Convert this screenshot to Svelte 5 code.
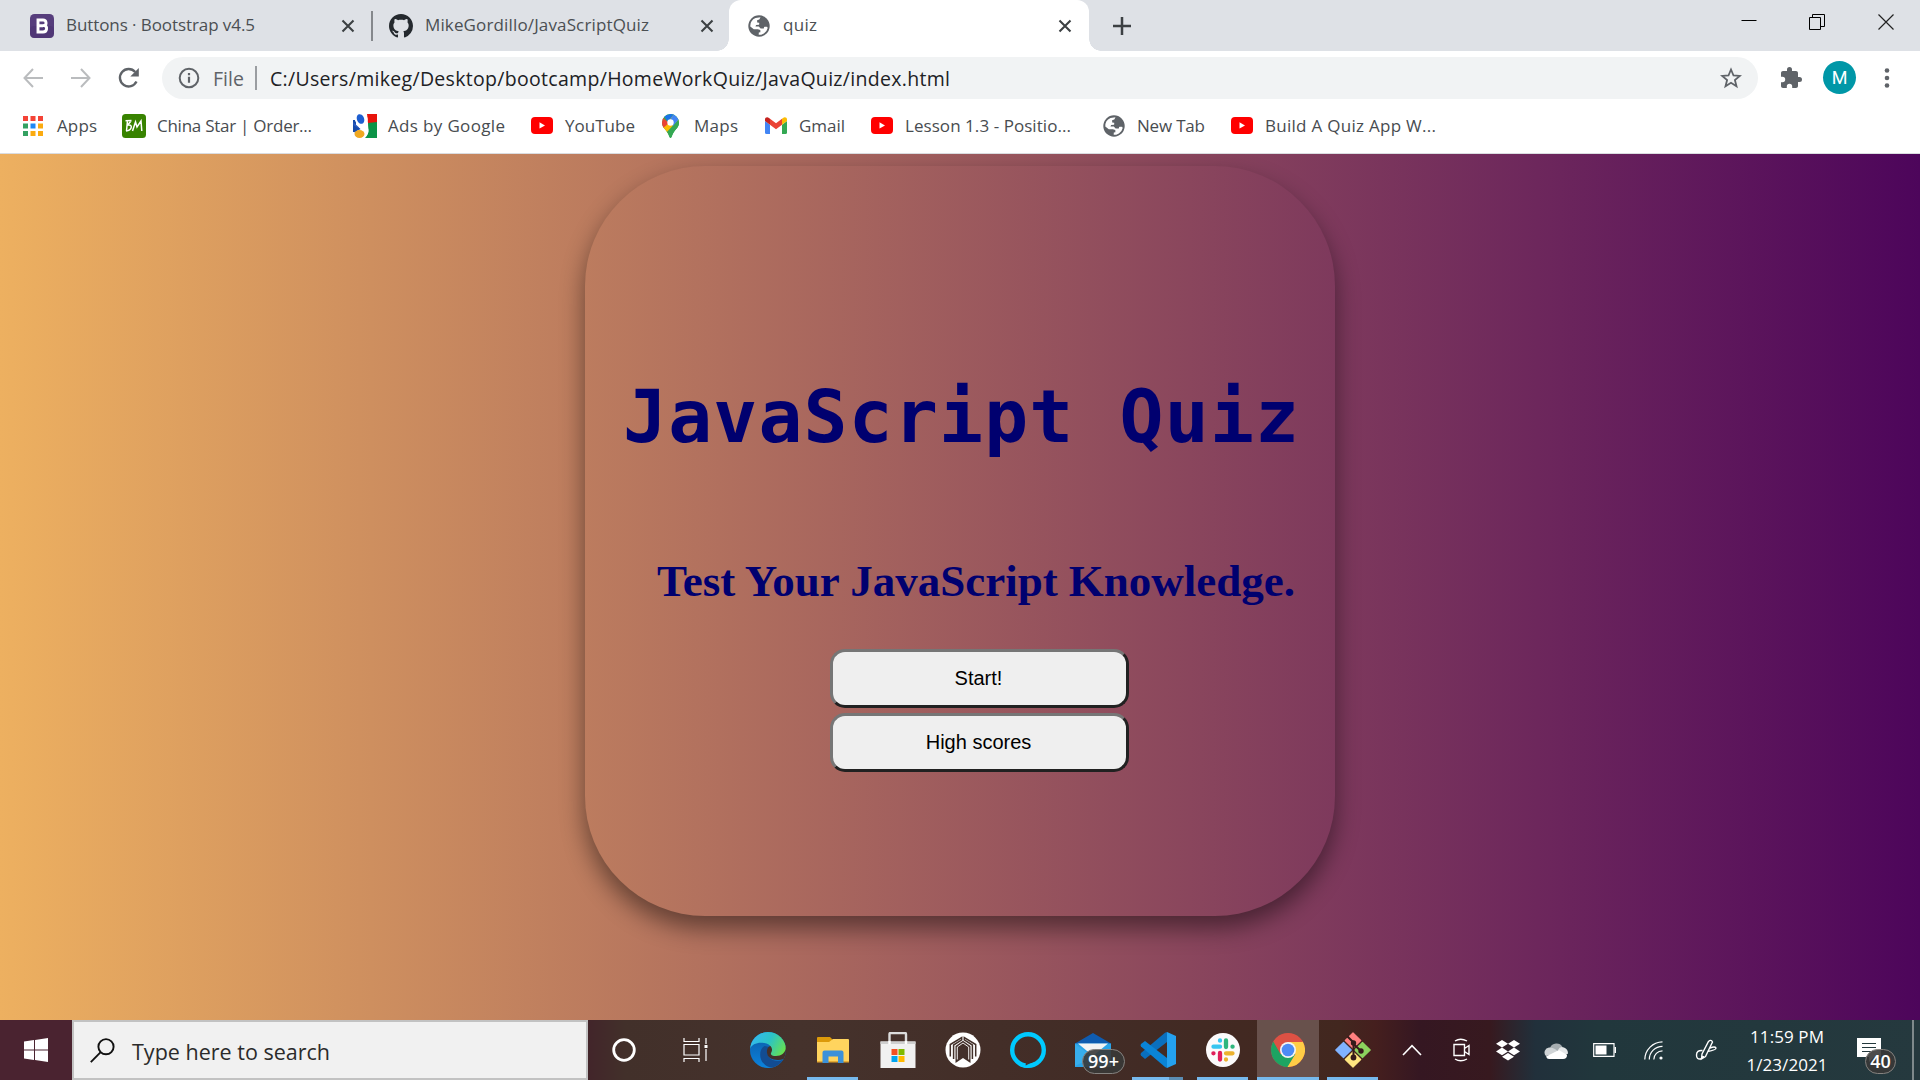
<script>
  // Spreads letters so that a label takes exactly the given width.
  function fit(el, width) {
    const n = el.textContent.length;
    const natural = el.getBoundingClientRect().width;
    el.style.letterSpacing = `${(width - natural) / Math.max(1, n - 1)}px`;
    el.style.marginRight = `${-(width - natural) / Math.max(1, n - 1)}px`;
  }

  const bookmarks = [
    { icon: 'apps', label: 'Apps', w: 40, gap: 14, box: 99 },
    { icon: 'bm', label: 'China Star | Order...', w: 155, gap: 11, box: 231 },
    { icon: 'ads', label: 'Ads by Google', w: 117, gap: 11, box: 178 },
    { icon: 'yt', label: 'YouTube', w: 70, gap: 12, box: 131 },
    { icon: 'maps', label: 'Maps', w: 44, gap: 15, box: 103 },
    { icon: 'gmail', label: 'Gmail', w: 46, gap: 12, box: 106 },
    { icon: 'yt', label: 'Lesson 1.3 - Positio...', w: 166, gap: 12, box: 231 },
    { icon: 'globe', label: 'New Tab', w: 68, gap: 11, box: 129 },
    { icon: 'yt', label: 'Build A Quiz App W...', w: 171, gap: 12, box: 230 }
  ];
</script>

{#snippet globe()}
  <svg width="24" height="24" viewBox="0 0 24 24">
    <circle cx="12" cy="12" r="10.7" fill="#5f6368" />
    <path d="M13.5 3.2l-1.2 2.3-2.2.7.1 2.4 2.1.1-.2 2.1-3 .1-.6 1.7 3.3 0 1.8 2 2.9 0 .8-1.9 2.8 0 .6 1.2a8.8 8.8 0 0 1-3.8 5.5l-2.7 1.3-2.5 0 .1-2.2 1.6-.3-.1-2.3-2.5-.6-4-.1L3.3 12.4a8.8 8.8 0 0 1 5.2-8.5z" fill="#fff" />
    <path d="M14 3.7l-1.1 2.2-1.9.9.2 1.2 2.3.5-.3 3.2 1.3 1.4 1.8 1.3 1.2-2.4 3.4.2.2-1.8A9 9 0 0 0 14 3.7z" fill="#5f6368" />
  </svg>
{/snippet}

{#snippet closeX()}
  <svg class="x" width="14" height="14" viewBox="0 0 14 14"><path d="M1.5 1.5l11 11M12.5 1.5l-11 11" stroke="#3c4043" stroke-width="2.1" /></svg>
{/snippet}

{#snippet mark(kind)}
  {#if kind === 'apps'}
    <svg width="20" height="20" viewBox="0 0 20 20">
      {#each ['#f44336', '#f44336', '#f44336', '#34a162', '#1e88f5', '#fbab10', '#34a162', '#fbab10', '#fbab10'] as c, i}
        <rect x={(i % 3) * 7.5} y={Math.floor(i / 3) * 7.5} width="5" height="5" fill={c} />
      {/each}
    </svg>
  {:else if kind === 'bm'}
    <svg width="24" height="24" viewBox="0 0 24 24">
      <rect width="24" height="24" rx="3.500" fill="#388300" />
      <path d="M3.500 6.800L9.500 6.500M5.500 6.500L4.500 17M5 11.300q5-1 4.200 2.400Q8.500 16.500 4 17M9 7L5.500 11.300M10.500 17L13.500 8l1.500 5 4-6 .8 10" fill="none" stroke="#fff" stroke-width="1.500" />
    </svg>
  {:else if kind === 'ads'}
    <svg width="24" height="24" viewBox="0 0 24 24">
      <path d="M14 0h10v9h-9z" fill="#e8140c" />
      <path d="M15 9l9-1v16H12c5-5 3-9 3-15z" fill="#0c9447" />
      <path d="M0 6h3v12H0z" fill="#164aa8" /><path d="M0 8l9 8-7 4z" fill="#2a5bc0" />
      <path d="M8 0c8 0 8 7 4 10 5 4 5 11-2 14H2c-2-5 2-8 6-9-3-2-3-5-1-5C0 10 0 0 8 0z" fill="#fff" />
      <ellipse cx="7.500" cy="5" rx="3.600" ry="5" fill="#1d5ed0" transform="rotate(-20 7.500 5)" />
      <path d="M0 11l7 4-6 3z" fill="#164aa8" />
      <ellipse cx="6.500" cy="20" rx="5" ry="4" fill="#f0a820" />
    </svg>
  {:else if kind === 'yt'}
    <svg width="22" height="17" viewBox="0 0 22 17"><rect width="22" height="17" rx="4" fill="#f00" /><path d="M8.500 5.200v6.400l5.500-3.200z" fill="#fff" /></svg>
  {:else if kind === 'maps'}
    <svg width="17" height="24" viewBox="0 0 17 24">
      <clipPath id="pin"><path d="M8.500 0A8.500 8.500 0 0 0 0 8.500c0 5 3.500 6.500 6 11 1 2 1.500 4.500 2.500 4.500s1.500-2.500 2.500-4.500c2.500-4.500 6-6 6-11A8.500 8.500 0 0 0 8.500 0z" /></clipPath>
      <g clip-path="url(#pin)">
        <path d="M0 0h17v24H0z" fill="#34a853" />
        <path d="M0 14L11 1.500 17 7 3 22z" fill="#fbbc04" /><path d="M3 20L17 5v19H3z" fill="#34a853" />
        <path d="M0 3l7 6-7 6z" fill="#ea4335" /><path d="M2 2L8 0h3.500L6 8z" fill="#1a73e8" /><path d="M11.500 0L17 5 11 12 7.500 7z" fill="#4285f4" />
      </g>
      <circle cx="8.500" cy="8.500" r="3.200" fill="#fff" />
    </svg>
  {:else if kind === 'gmail'}
    <svg width="22" height="17" viewBox="0 0 22 17">
      <path d="M0 4l5 3.700V17H1.500A1.500 1.500 0 0 1 0 15.500z" fill="#4285f4" />
      <path d="M22 4l-5 3.700V17h3.500a1.500 1.500 0 0 0 1.500-1.500z" fill="#34a853" />
      <path d="M5 1.700l6 4.500 6-4.500v6L11 12.200 5 7.700z" fill="#ea4335" />
      <path d="M0 2.500C0 .3 2.300-.5 4 .9l1 .8v6L0 4z" fill="#c5221f" />
      <path d="M22 2.500c0-2.200-2.300-3-4-1.600l-1 .8v6L22 4z" fill="#fbbc04" />
    </svg>
  {:else}
    {@render globe()}
  {/if}
{/snippet}

<div class="screen">
  <header class="tabs">
    <div class="tab first">
      <svg width="24" height="24" viewBox="0 0 24 24"><rect width="24" height="24" rx="4.500" fill="#563d7c" /><rect y="12" width="24" height="12" rx="4" fill="#4a3270" opacity=".5" /><path d="M8 6h5c3.600 0 4 4.600 1.200 5.500 3.500.7 3.200 6.500-1.200 6.500H8zM8 11.700h5" fill="none" stroke="#fff" stroke-width="2.900" /></svg>
      <span class="tt" use:fit={189}>Buttons · Bootstrap v4.5</span>
      {@render closeX()}
    </div>
    <div class="tab second">
      <svg width="24" height="24" viewBox="0 0 16 16"><path fill="#24292e" d="M8 0C3.580 0 0 3.580 0 8c0 3.540 2.290 6.530 5.470 7.590.4.070.55-.17.55-.38 0-.19-.01-.82-.01-1.490-2.010.37-2.530-.49-2.690-.94-.09-.23-.48-.94-.82-1.130-.28-.15-.68-.52-.01-.53.63-.01 1.080.58 1.230.82.72 1.210 1.870.87 2.330.66.07-.52.28-.87.51-1.070-1.780-.2-3.640-.89-3.640-3.950 0-.87.31-1.590.82-2.150-.08-.2-.36-1.020.08-2.120 0 0 .67-.21 2.200.82.64-.18 1.320-.27 2-.27s1.360.09 2 .27c1.530-1.040 2.200-.82 2.200-.82.44 1.100.16 1.920.08 2.120.51.56.82 1.270.82 2.150 0 3.070-1.870 3.750-3.650 3.950.29.25.54.73.54 1.480 0 1.070-.01 1.930-.01 2.200 0 .21.15.46.55.38A8.010 8.010 0 0 0 16 8c0-4.420-3.580-8-8-8z" /></svg>
      <span class="tt" use:fit={224}>MikeGordillo/JavaScriptQuiz</span>
      {@render closeX()}
    </div>
    <div class="tab active">
      {@render globe()}
      <span class="tt" use:fit={34}>quiz</span>
      {@render closeX()}
    </div>
    <svg class="plus" width="18" height="18" viewBox="0 0 18 18"><path d="M9 0v18M0 9h18" stroke="#3c4043" stroke-width="2.500" /></svg>
    <div class="winctl">
      <svg width="16" height="16" viewBox="0 0 16 16"><path d="M.5 6.500h15" stroke="#000" /></svg>
      <svg width="16" height="16" viewBox="0 0 16 16" fill="none" stroke="#000"><path d="M.5 3.500h11v12h-11zM3.500 3.500v-3h12v12h-4" /></svg>
      <svg width="16" height="16" viewBox="0 0 16 16"><path d="M.5.5l15 15M15.500.5l-15 15" stroke="#222" stroke-width="1.200" /></svg>
    </div>
  </header>

  <div class="toolbar">
    <svg class="nav" width="20" height="20" viewBox="0 0 20 20" fill="none" stroke="#babcbe" stroke-width="2"><path d="M20 10H1.500M10 1L1.500 10l8.500 9" /></svg>
    <svg class="nav" width="20" height="20" viewBox="0 0 20 20" fill="none" stroke="#babcbe" stroke-width="2"><path d="M0 10h18.500M10 1l8.500 9-8.500 9" /></svg>
    <svg class="reload" width="22" height="22" viewBox="0 0 22 22"><path d="M18.500 14.500A8.700 8.700 0 1 1 17.200 5" fill="none" stroke="#5f6368" stroke-width="2.400" /><path d="M20.800 1v8.500h-8.500z" fill="#5f6368" /></svg>
    <div class="omni">
      <svg width="22" height="22" viewBox="0 0 22 22"><circle cx="11" cy="11" r="9.300" fill="none" stroke="#5f6368" stroke-width="2" /><path d="M11 9.700v6M11 6v2.200" stroke="#5f6368" stroke-width="2.200" /></svg>
      <span class="file"><span use:fit={31}>File</span></span>
      <i></i>
      <span class="url"><span use:fit={680}>C:/Users/mikeg/Desktop/bootcamp/HomeWorkQuiz/JavaQuiz/index.html</span></span>
      <svg class="star" width="22" height="22" viewBox="0 0 22 22"><path d="M11 2.500l2.500 6 6.300.4-4.900 4.100 1.600 6.300L11 15.800l-5.500 3.500L7.100 13 2.200 8.900l6.300-.4z" fill="none" stroke="#5f6368" stroke-width="1.800" /></svg>
    </div>
    <svg class="puzzle" width="24" height="24" viewBox="0 0 24 24"><path fill="#5f6368" d="M20.500 11H19V7c0-1.100-.9-2-2-2h-4V3.500a2.500 2.500 0 0 0-5 0V5H4c-1.100 0-2 .9-2 2v3.800h1.500a2.700 2.700 0 0 1 0 5.400H2V20c0 1.100.9 2 2 2h3.800v-1.500a2.700 2.700 0 0 1 5.400 0V22H17c1.100 0 2-.9 2-2v-4h1.500a2.500 2.500 0 0 0 0-5z" /></svg>
    <div class="avatar">M</div>
    <svg class="dots" width="6" height="22" viewBox="0 0 6 22" fill="#5f6368"><circle cx="3" cy="3.500" r="2.300" /><circle cx="3" cy="11" r="2.300" /><circle cx="3" cy="18.500" r="2.300" /></svg>
  </div>

  <nav class="marks">
    {#each bookmarks as b}
      <div class="bm" style:width="{b.box}px" style:gap="{b.gap}px">{@render mark(b.icon)}<span use:fit={b.w}>{b.label}</span></div>
    {/each}
  </nav>

  <main>
    <section class="card">
      <h1><span use:fit={676}>JavaScript Quiz</span></h1>
      <h2><span use:fit={638}>Test Your JavaScript Knowledge.</span></h2>
      <button>Start!</button>
      <button>High scores</button>
    </section>
  </main>

  <footer>
    <div class="start"><svg width="24" height="24" viewBox="0 0 24 24" fill="#fff"><path d="M0 3.400l10-1.400v9.500H0zM11 1.900L24 0v11.500H11zM0 12.500h10V22L0 20.600zM11 12.500h13V24l-13-1.900z" /></svg></div>
    <div class="search">
      <svg width="25" height="25" viewBox="0 0 25 25" fill="none" stroke="#111" stroke-width="1.900"><circle cx="16" cy="8.700" r="7.600" /><path d="M10.700 14.200L.8 24.200" /></svg>
      <span use:fit={198}>Type here to search</span>
    </div>
    <div class="apps">
      <div class="app sys"><svg width="24" height="24" viewBox="0 0 24 24"><circle cx="12" cy="12" r="10.300" fill="none" stroke="#fff" stroke-width="2.800" /></svg></div>
      <div class="app sys"><svg width="26" height="24" viewBox="0 0 26 24" fill="none" stroke="#fff" stroke-width="1.200"><path d="M1 0v3.500h15V0M1 24v-3.500h15V24M1 6.500h15v10.500H1zM23 0v6M23 11v12" /><path d="M21.500 7h3v3h-3z" fill="#fff" stroke="none" /></svg></div>
      <div class="app edge">
        <svg width="36" height="36" viewBox="0 0 36 36">
          <defs>
            <linearGradient id="ea" x1="0" x2="1" y1=".3" y2=".7"><stop offset="0" stop-color="#35b8f1" /><stop offset=".5" stop-color="#2cc3c5" /><stop offset="1" stop-color="#68e24f" /></linearGradient>
            <linearGradient id="eb" x1="0" x2="0" y1="0" y2="1"><stop offset="0" stop-color="#0c59a4" /><stop offset="1" stop-color="#0b83dd" /></linearGradient>
            <clipPath id="ec"><circle cx="18" cy="18" r="18" /></clipPath>
          </defs>
          <g clip-path="url(#ec)">
            <path d="M0 0h36v36H0z" fill="url(#eb)" />
            <path d="M14.500 14c-8 5-5 22 10 22 5-1.500 8-4.500 9-8.500-5 2.500-11.500 1.500-14.500-2.500-2-3-2-7.500.5-10z" fill="#124c92" />
            <path d="M18.500 15c-2.500 3-2 8 1 10.500 4 3 10 3 14.500 1.500L36 25V14H20z" fill="#443029" />
            <path d="M0 17C0 7 8-1 18-1c10 0 18 7 18 15.500C36 21 31 24 26 24c-4 0-6-1.500-4.700-3.500 2.200-4-.8-7.500-4.800-9C9 9.500 2 11.500 0 17z" fill="url(#ea)" />
          </g>
        </svg>
      </div>
      <div class="app">
        <svg width="34" height="28" viewBox="0 0 34 28"><path d="M1 2q0-1 1-1h12l3 3-2 4H1z" fill="#dc9a0a" /><path d="M1 6h12l4-3h15q1 0 1 1v22H1z" fill="#ffd45e" /><path d="M1 25h32v1.500H1z" fill="#e6aa32" /><path d="M6.500 27V16.500q0-2 2-2h17q2 0 2 2V27H22v-6.500h-9.500V27z" fill="#3b91d9" /></svg>
        <u></u>
      </div>
      <div class="app">
        <svg width="36" height="36" viewBox="0 0 36 36"><path d="M9.500 12V2q0-1 1-1h14.500q1 0 1 1v10" fill="none" stroke="#dcdcdc" stroke-width="2.400" /><path d="M.5 9.500h35V36H.5z" fill="#f1f1f1" /><path d="M.5 9.500h35V12H.5z" fill="#cfcfcf" /><path d="M9.500 9v3.300M26 9v3.300" stroke="#fff" stroke-width="2.400" /><path d="M11.500 17h6v6h-6z" fill="#f25022" /><path d="M18.500 17h6v6h-6z" fill="#7fba00" /><path d="M11.500 24h6v6h-6z" fill="#00a4ef" /><path d="M18.500 24h6v6h-6z" fill="#ffb900" /></svg>
      </div>
      <div class="app">
        <svg width="36" height="36" viewBox="0 0 36 36"><circle cx="18" cy="18" r="17.500" fill="#fff" /><g fill="none" stroke="#42302a" stroke-width="2"><path d="M5.300 24.500V12.500L16.700 5.500v2.300L8.600 13v14M30.700 24.500V12.500L19.300 5.500v2.300L27.400 13v14" stroke-width="1.500" /></g><path d="M10.500 31V14L18 8.800 25.500 14v17L18 26z" fill="#43302b" /><path d="M12.300 27.500V15L18 11l5.700 4v12.500" fill="none" stroke="#fff" stroke-width=".9" /></svg>
      </div>
      <div class="app"><svg width="36" height="36" viewBox="0 0 36 36"><circle cx="18" cy="18" r="15.800" fill="none" stroke="#00caff" stroke-width="4.400" /><path d="M15.300 36.500V31q5 2 9-1l-3 5z" fill="#00caff" /><path d="M10 31.500l5.300 1.300V36L10 34z" fill="#00caff" /><path d="M15.700 30.500v3l5-2.500z" fill="#43302b" /></svg></div>
      <div class="app">
        <svg width="36" height="34" viewBox="0 0 36 34"><path d="M0 10.500L18 0l18 10.500v6H0z" fill="#0f5cb0" /><path d="M0 10.500h36V34H0z" fill="#2aa4e8" /><path d="M3 10.500h30L18 23z" fill="#f4f4f4" /><path d="M0 11l18 13-18 9z" fill="#38aeec" /></svg>
        <b class="badge mail">99+</b>
      </div>
      <div class="app">
        <svg width="36" height="36" viewBox="0 0 36 36"><path d="M27 0l9 4v28l-9 4z" fill="#24a1ef" /><path d="M27 0v10L5 27l-4-3.500Q0 22 1 21L25 .8z" fill="#0a6fbd" /><path d="M27 36V26L5 9 1 12q-1 1.300 0 2.500L25 35z" fill="#0a84d6" /></svg>
        <u class="grp"></u><u class="grp2"></u>
      </div>
      <div class="app">
        <svg width="34" height="34" viewBox="0 0 34 34"><circle cx="17" cy="17" r="17" fill="#fbfafb" /><g stroke-width="4.300" stroke-linecap="round"><path d="M7.500 13.700h6.500M14 7.500v.2" stroke="#36c5f0" /><path d="M20 7.500V14M26.500 13.700h.1" stroke="#2eb67d" /><path d="M26.500 20.300H20M20 26.500v-.1" stroke="#ecb22e" /><path d="M14 26.500V20M7.500 20.300h-.1" stroke="#e01e5a" /></g></svg>
        <u></u>
      </div>
      <div class="app on">
        <svg width="34" height="34" viewBox="0 0 34 34"><circle cx="17" cy="17" r="17" fill="#dd5144" /><path d="M2.300 8.500A17 17 0 0 0 17 34l7.500-13H9.500z" fill="#1da462" /><path d="M31.800 8.800A17 17 0 0 1 16.500 34l7.900-13L17 9z" fill="#ffcd46" /><path d="M3 8l6.500 12.500L17 9h14.800A17 17 0 0 0 3 8z" fill="#dd5144" /><circle cx="17" cy="17" r="8" fill="#f4f4f4" /><circle cx="17" cy="17" r="6.300" fill="#4c8bf5" /></svg>
        <u class="wide"></u>
      </div>
      <div class="app">
        <svg width="36" height="36" viewBox="0 0 36 36"><g stroke-linejoin="round" stroke-width="1.200"><path d="M18 .8l7.700 7.700L18 16.200l-7.700-7.700z" fill="#ff8080" stroke="#ff8080" /><path d="M27.500 10.300l7.700 7.700-7.700 7.700-7.700-7.700z" fill="#8cd35e" stroke="#8cd35e" /><path d="M8.500 10.300l7.700 7.700-7.700 7.700L.8 18z" fill="#80b3ff" stroke="#80b3ff" /><path d="M18 19.800l7.700 7.700-7.700 7.700-7.700-7.700z" fill="#ffe680" stroke="#ffe680" /></g><path d="M12.500 4.500l6 6V26M18.500 12l7.500 7" fill="none" stroke="#351a1a" stroke-width="2" /><circle cx="18.500" cy="11" r="2.700" fill="#351a1a" /><circle cx="18.500" cy="25.500" r="2.900" fill="#351a1a" /><circle cx="26" cy="19" r="2.700" fill="#351a1a" /></svg>
        <u></u>
      </div>
    </div>
    <div class="tray">
      <svg width="20" height="12" viewBox="0 0 20 12"><path d="M1 11l9-9.300 9 9.300" fill="none" stroke="#fff" stroke-width="1.600" /></svg>
      <svg class="cam" width="18" height="24" viewBox="0 0 18 24" fill="none" stroke="#fff" stroke-width="1.400"><path d="M1 6.500h10.500v11H1zM11.500 10.500l4.500-3v9l-4.500-3M2 3q5.500-3.500 12 0M2 21q5.500 3.500 12 0" /></svg>
      <svg class="drop" width="24" height="21" viewBox="0 0 24 21" fill="#fff"><path d="M6 0l6 3.800-6 3.800L0 3.800zM18 0l6 3.800-6 3.800-6-3.800zM6 7.600l6 3.800-6 3.800-6-3.800zM18 7.600l6 3.800-6 3.800-6-3.800zM12 12.900l6 3.800-6 3.900-6-3.900z" /></svg>
      <svg class="cloud" width="24" height="17" viewBox="0 0 24 17"><path d="M6 6A7 7 0 0 1 18.500 5L14 10z" fill="#a6adb0" /><path d="M2 14A5 5 0 0 1 5 5.500q3-.5 6 1.500l5 4z" fill="#d0d4d6" /><path d="M14 8q2-4 6-2.500 4 1.500 4 6l-3 2z" fill="#e5e7e8" /><path d="M2 14.500L15 8l8 5q0 4-4 4H5q-2 0-3-2.500z" fill="#fff" /></svg>
      <svg class="bat" width="23" height="14" viewBox="0 0 23 14"><path d="M.7.7h20.300v12.600H.7z" fill="none" stroke="#fff" stroke-width="1.200" /><path d="M2.500 2.500h11v9h-11z" fill="#fff" /><path d="M22.300 4v6" stroke="#fff" stroke-width="1.500" /></svg>
      <svg class="wifi" width="19" height="19" viewBox="0 0 19 19" fill="none" stroke="#fff" stroke-width="1.200"><path d="M.8 18.500A18 18 0 0 1 18.500.8M5.300 18.500A13.200 13.200 0 0 1 18.500 5.300M9.800 18.500a8.700 8.700 0 0 1 8.700-8.700" /><circle cx="17" cy="17" r="1.600" fill="#fff" stroke="none" /></svg>
      <svg class="pen" width="22" height="22" viewBox="0 0 22 22" fill="none" stroke="#fff" stroke-width="1.400"><path d="M13.500 2.500q2.500-2.500 4 .5L10.500 17.500 6.500 20l.5-5zM7.500 11.500q-6-.5-6 4.500 0 4.500 4 4 2.500-.7 3-3M15 9q5-2 6 0 .3 2-8.500 3.500" /></svg>
      <div class="clock"><span use:fit={74}>11:59 PM</span><span use:fit={81}>1/23/2021</span></div>
      <div class="note">
        <svg width="24" height="24" viewBox="0 0 24 24"><path d="M0 0h24v19h-7l-5 5v-5H0z" fill="#fff" /><path d="M5 5.500h14M5 9.500h14M5 13.500h10" stroke="#24393d" stroke-width="1.200" /></svg>
        <b class="badge n40">40</b>
      </div>
    </div>
  </footer>
</div>

<style>
  :global(body) { margin: 0; overflow: hidden; }
  .screen { width: 1920px; height: 1080px; display: flex; flex-direction: column; font-family: 'Open Sans', 'Noto Sans', sans-serif; overflow: hidden; }
  svg { display: block; flex: none; }
  span { white-space: nowrap; }

  .tabs { height: 51px; flex: none; background: #dee1e6; display: flex; align-items: center; box-sizing: border-box; }
  .tab { display: flex; align-items: center; height: 51px; box-sizing: border-box; font-size: 17px; color: #4b4f53; }
  .tab .x { margin-left: auto; }
  .tab .tt { margin-top: -2px; }
  .tab svg + .tt { margin-left: 12px; }
  .first { width: 373px; padding: 0 18px 0 30px; background: linear-gradient(#85888c, #85888c) right 0 center / 2px 30px no-repeat; }
  .second { width: 356px; padding: 0 15px 0 16px; }
  .active { position: relative; width: 360px; background: #fff; border-radius: 12px 12px 0 0; padding: 0 17px 0 18px; }
  .active::before, .active::after { content: ''; position: absolute; bottom: 0; width: 12px; height: 12px; }
  .active::before { left: -12px; background: radial-gradient(circle at 0 0, transparent 11.500px, #fff 12px); }
  .active::after { right: -12px; background: radial-gradient(circle at 100% 0, transparent 11.500px, #fff 12px); }
  .plus { margin-left: 24px; }
  .winctl { margin-left: auto; display: flex; gap: 52.500px; padding: 0 26.500px 7px 0; }

  .toolbar { height: 53px; flex: none; background: #fff; display: flex; align-items: center; padding-left: 23px; box-sizing: border-box; }
  .nav { margin-right: 28px; }
  .nav + .reload { margin-left: -1px; }
  .reload { margin-right: 22px; }
  .omni { width: 1596px; height: 42px; margin-top: 1px; border-radius: 21px; background: #f1f3f4; display: flex; align-items: center; padding: 0 16px; box-sizing: border-box; font-size: 19.500px; flex: none; }
  .file { width: 30px; margin-left: 13px; color: #5f6368; }
  .omni i { width: 2px; height: 24px; margin: 0 13px 0 12px; background: #9a9da1; }
  .url { color: #202124; }
  .star { margin-left: auto; }
  .puzzle { margin: 0 20px 0 21px; }
  .avatar { width: 33px; height: 33px; border-radius: 50%; background: #0097a7; color: #fff; text-align: center; font: 18px/33px Roboto, sans-serif; flex: none; }
  .dots { margin-left: 28px; }

  .marks { height: 50px; flex: none; background: #fff; border-bottom: 1px solid #dadce0; display: flex; align-items: center; padding: 0 0 6px 23px; box-sizing: border-box; font-size: 17px; color: #484c50; }
  .bm { display: flex; align-items: center; flex: none; }

  main { height: 866px; flex: none; background: linear-gradient(to right, #edb060, #4d055b); display: flex; justify-content: center; padding-top: 12px; box-sizing: border-box; }
  .card { width: 750px; height: 750px; border-radius: 120px; box-shadow: 0 12px 25px rgba(0, 0, 0, .46); display: flex; flex-direction: column; align-items: center; box-sizing: border-box; padding: 207px 0 0; }
  h1 { margin: 0; width: 100%; box-sizing: border-box; padding-left: 38px; height: 100px; font: bold 73px/88px 'DejaVu Sans Mono', monospace; color: #00006f; }
  h2 { margin: 81px 0 0; width: 100%; box-sizing: border-box; padding-left: 72px; height: 95px; font: bold 45px/54px 'Liberation Serif', serif; color: #00006f; }
  button { width: 299px; height: 59px; margin: 0 0 5px 39px; flex: none; padding: 0 2px 0 0; border: 3px solid; border-color: #767676 #212121 #212121 #767676; border-radius: 15px; background: #efefef; color: #000; font: 20px 'Liberation Sans', sans-serif; }

  footer { height: 60px; flex: none; display: flex; background: linear-gradient(to right, #4a2330 0, #4a2330 72px, #42252a 588px, #42302a 625px, #45322c 800px, #422c26 1100px, #42271f 1340px, #451f1e 1375px, #351722 1420px, #37191f 1490px, #21303b 1535px, #21373c 1600px, #25393e 1920px); }
  .start { width: 72px; display: grid; place-items: center; }
  .search { width: 516px; box-sizing: border-box; border: 2px solid #c2c2c2; background: #f1f1f1; display: flex; align-items: center; padding-left: 16px; gap: 17px; font-size: 21.500px; color: #2b2b2b; }
  .search span { padding-top: 2px; }
  .apps { display: flex; width: 798px; flex: none; }
  .app { position: relative; width: 65px; display: grid; place-items: center; flex: none; }
  .sys { width: 72px; }
  .edge { margin-left: 3px; }
  .app u { position: absolute; bottom: 0; left: 7px; width: 51px; height: 3px; background: #76b9ed; }
  .app u.wide { width: 62px; left: 2px; }
  .app u.grp { width: 37px; }
  .app u.grp2 { left: 44px; width: 14px; background: #5b8db3; }
  .on { background: linear-gradient(#68514c, #68514c) 2px 0 / 62px 60px no-repeat; }
  .badge { position: absolute; box-sizing: border-box; height: 25px; border: 1px solid #85827f; border-radius: 13px; background: rgba(57, 57, 55, .9); color: #fff; font: 600 18px/22px 'Open Sans', sans-serif; text-align: center; }
  .mail { width: 43px; left: 22px; top: 29px; }
  .n40 { width: 31px; left: 8px; top: 11px; }
  .tray { display: flex; align-items: center; width: 534px; box-sizing: border-box; padding-left: 16px; background: linear-gradient(#7e898b, #7e898b) right 6px center / 2px 60px no-repeat; }
  .cam { margin-left: 31px; }
  .drop { margin-left: 25px; }
  .cloud { margin-left: 24px; }
  .bat { margin-left: 25px; }
  .wifi { margin-left: 28px; }
  .pen { margin-left: 32px; }
  .clock { width: 84px; margin-left: 28px; display: flex; flex-direction: column; align-items: center; gap: 4px; font-size: 17px; line-height: 24px; color: #fff; padding-top: 1px; }
  .note { position: relative; margin-left: 28px; margin-top: -1px; }
</style>
